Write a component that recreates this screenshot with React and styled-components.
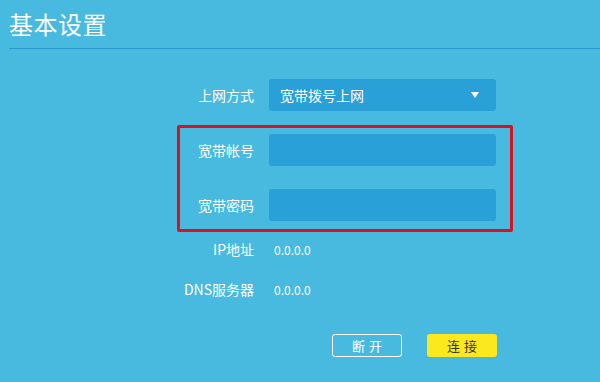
import styled, { createGlobalStyle } from "styled-components";

const GlobalStyle = createGlobalStyle`
  html, body {
    margin: 0;
    padding: 0;
    background: #48badf;
  }
  body {
    font-family: "Noto Sans CJK SC", "Noto Sans", sans-serif;
    color: #fff;
  }
`;

const Page = styled.div`
  width: 600px;
  height: 382px;
  background: #48badf;
  overflow: hidden;
`;

const Header = styled.div`
  margin-left: 9px;
  padding: 8px 0 8px;
  border-bottom: 1px solid #2a9bd1;
`;

const Title = styled.h1`
  margin: 0;
  font-size: 24px;
  line-height: 32px;
  font-weight: 400;
  letter-spacing: 0.5px;
`;

const Form = styled.div`
  margin: 30px 0 0 180px;
  display: flex;
  flex-direction: column;
`;

const Row = styled.div`
  display: grid;
  grid-template-columns: 74px 227px;
  column-gap: 15px;
  align-items: center;
  height: ${(p) => p.$h || 32}px;
  margin-top: ${(p) => p.$mt || 0}px;
`;

const Label = styled.div`
  text-align: right;
  font-size: 14px;
  white-space: nowrap;
`;

const Field = styled.div`
  height: 32px;
  border-radius: 3px;
  background: #2aa0d9;
  display: flex;
  align-items: center;
  justify-content: space-between;
  padding: 0 17px 0 11px;
  box-sizing: border-box;
  font-size: 14px;
`;

const Arrow = styled.span`
  width: 0;
  height: 0;
  border-left: 4px solid transparent;
  border-right: 4px solid transparent;
  border-top: 6px solid #fff;
`;

const Highlight = styled.div`
  margin: 14px 0 0 -3px;
  width: 330px;
  border: 3px solid #d8121f;
  border-radius: 2px;
  padding: 6px 0 8px 0;
  display: flex;
  flex-direction: column;
  gap: 23px;
`;

const Value = styled.div`
  font-size: 12px;
  padding-left: 5px;
`;

const Actions = styled.div`
  display: flex;
  gap: 25px;
  margin: 35px 0 0 152px;
`;

const Button = styled.button`
  width: 70px;
  height: 23px;
  border-radius: 3px;
  box-sizing: border-box;
  font-family: inherit;
  font-size: 13px;
  letter-spacing: 4px;
  padding: 0 0 0 4px;
  cursor: pointer;
  border: ${(p) => (p.$primary ? "none" : "1px solid #fff")};
  background: ${(p) => (p.$primary ? "#fbe91e" : "transparent")};
  color: ${(p) => (p.$primary ? "#333" : "#fff")};
`;

export default function App() {
  return (
    <Page>
      <GlobalStyle />
      <Header>
        <Title>基本设置</Title>
      </Header>
      <Form>
        <Row>
          <Label>上网方式</Label>
          <Field>
            <span>宽带拨号上网</span>
            <Arrow />
          </Field>
        </Row>
        <Highlight>
          <Row>
            <Label>宽带帐号</Label>
            <Field />
          </Row>
          <Row>
            <Label>宽带密码</Label>
            <Field />
          </Row>
        </Highlight>
        <Row $h={20} $mt={7}>
          <Label>IP地址</Label>
          <Value>0.0.0.0</Value>
        </Row>
        <Row $h={20} $mt={20}>
          <Label>DNS服务器</Label>
          <Value>0.0.0.0</Value>
        </Row>
        <Actions>
          <Button>断开</Button>
          <Button $primary>连接</Button>
        </Actions>
      </Form>
    </Page>
  );
}
